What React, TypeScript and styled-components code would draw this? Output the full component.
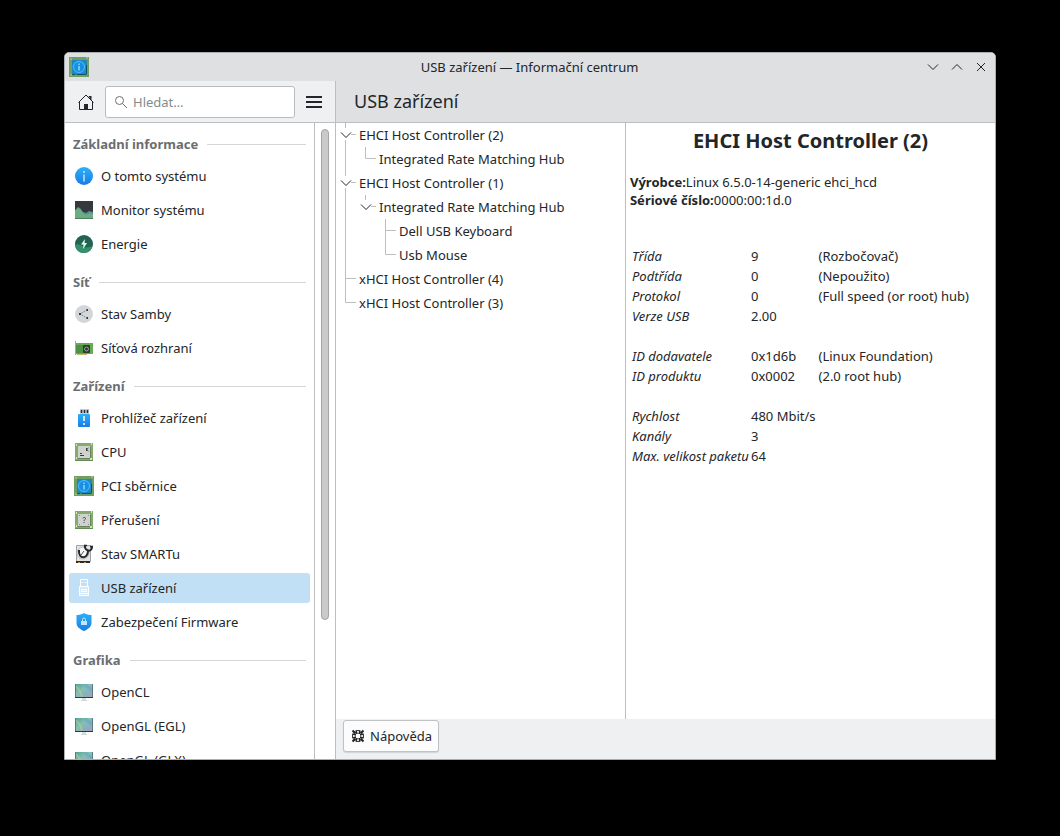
import React from 'react';
import styled, { createGlobalStyle, css } from 'styled-components';

const color = {
  text: '#232629',
  muted: '#6b6e70',
  chrome: '#dee0e2',
  panel: '#eff0f1',
  line: '#bcbec0',
  guide: '#bcbec0',
  highlight: '#c2e0f5',
};

const GlobalStyle = createGlobalStyle`
  * { box-sizing: border-box; }
  body {
    margin: 0;
    background: #000;
    color: ${color.text};
    font: 13px/18px "Noto Sans", sans-serif;
  }
  button, input { font: inherit; color: inherit; }
  svg { display: block; flex: none; }
`;

const Desktop = styled.div`
  height: 100vh;
  padding: 52px 64px 76px;
  display: flex;
`;

const Window = styled.div`
  flex: 1;
  min-width: 0;
  display: flex;
  flex-direction: column;
  background: #fff;
  border: 1px solid #abadaf;
  border-radius: 5px 5px 0 0;
  overflow: hidden;
`;

const TitleBar = styled.header`
  flex: none;
  display: grid;
  grid-template-columns: 72px 1fr 72px;
  align-items: center;
  height: 28px;
  padding: 0 2px 0 3px;
  background: ${color.chrome};
`;

const WindowTitle = styled.div`
  padding-right: 2px;
  text-align: center;
`;

const WindowButtons = styled.div`
  display: flex;
`;

const WindowButton = styled.button`
  display: grid;
  place-items: center;
  width: 24px;
  height: 24px;
  padding: 0;
  border: 0;
  background: none;
`;

const Body = styled.div`
  flex: 1;
  min-height: 0;
  display: flex;
`;

const Sidebar = styled.aside`
  flex: none;
  width: 271px;
  display: flex;
  flex-direction: column;
  border-right: 1px solid ${color.line};
`;

const SidebarHeader = styled.div`
  flex: none;
  display: flex;
  align-items: center;
  height: 42px;
  padding: 0 7px;
  background: ${color.panel};
  border-bottom: 1px solid ${color.line};
`;

const ToolButton = styled.button`
  display: grid;
  place-items: center;
  flex: none;
  width: 28px;
  height: 32px;
  padding: 0;
  border: 0;
  background: none;
`;

const SearchField = styled.label`
  flex: 1;
  min-width: 0;
  display: flex;
  align-items: center;
  gap: 5px;
  height: 32px;
  margin: 0 5px;
  padding: 0 8px;
  background: #fff;
  border: 1px solid #b9bbbd;
  border-radius: 3px;
`;

const SearchInput = styled.input`
  flex: 1;
  min-width: 0;
  padding: 0;
  border: 0;
  outline: 0;
  background: none;
  &::placeholder { color: #7f8c8d; opacity: 1; }
`;

const SidebarBody = styled.div`
  flex: 1;
  min-height: 0;
  display: flex;
`;

const Nav = styled.nav`
  flex: 1;
  min-width: 0;
  overflow: hidden;
  border-right: 1px solid ${color.line};
`;

const GroupTitle = styled.h2`
  display: flex;
  align-items: center;
  gap: 9px;
  height: 36px;
  margin: 0;
  padding: 6px 8px 0;
  color: ${color.muted};
  font-size: 13px;
  font-weight: 700;
  &::after {
    content: "";
    flex: 1;
    height: 1px;
    background: #d5d6d7;
  }
`;

const NavList = styled.ul`
  margin: 0;
  padding: 0 4px;
  list-style: none;
`;

const NavItem = styled.li`
  padding: 2px 0;
`;

const NavLink = styled.a<{ $active?: boolean }>`
  display: flex;
  align-items: center;
  gap: 6px;
  height: 30px;
  padding: 0 4px;
  border-radius: 3px;
  color: inherit;
  text-decoration: none;
  white-space: nowrap;
  ${(p) => p.$active && css`background: ${color.highlight};`}
`;

const ScrollTrack = styled.div`
  flex: none;
  width: 20px;
  display: grid;
  grid-template-rows: 37fr 10fr;
  padding: 6px;
`;

const ScrollThumb = styled.div`
  background: #cacaca;
  border: 1px solid #a3a4a5;
  border-radius: 4px;
`;

const Main = styled.main`
  flex: 1;
  min-width: 0;
  display: flex;
  flex-direction: column;
`;

const PageHeader = styled.div`
  flex: none;
  display: flex;
  align-items: center;
  height: 42px;
  padding: 0 18px 2px;
  background: ${color.chrome};
  border-bottom: 1px solid ${color.line};
`;

const PageTitle = styled.h1`
  margin: 0;
  font-size: 18px;
  line-height: 24px;
  font-weight: 400;
`;

const Panes = styled.div`
  flex: 1;
  min-height: 0;
  display: grid;
  grid-template-columns: 11fr 14fr;
`;

const Tree = styled.ul`
  margin: 0;
  padding: 0;
  list-style: none;
  border-right: 1px solid ${color.line};
`;

const TreeRow = styled.li`
  display: flex;
  align-items: center;
  height: 24px;
  white-space: nowrap;
`;

const TreeLabel = styled.span`
  padding-left: 3px;
`;

const Details = styled.section`
  min-width: 0;
  padding: 4px;
  overflow: hidden;
`;

const DeviceName = styled.h2`
  margin: 0 0 18px;
  font-size: 20px;
  line-height: 28px;
  font-weight: 700;
  text-align: center;
`;

const Summary = styled.p`
  margin: 0 0 37px;
`;

const Properties = styled.table`
  border-collapse: collapse;
  white-space: nowrap;
`;

const PropertyName = styled.th`
  height: 20px;
  min-width: 121px;
  padding: 0 2px;
  font-weight: 400;
  font-style: italic;
  text-align: left;
`;

const PropertyValue = styled.td`
  height: 20px;
  padding: 0 3px 0 0;
`;

const Footer = styled.footer`
  flex: none;
  display: flex;
  height: 40px;
  padding: 1px 7px;
  background: ${color.panel};
`;

const HelpButton = styled.button`
  display: flex;
  align-items: center;
  gap: 4px;
  height: 32px;
  padding: 0 6px;
  background: #fcfcfc;
  border: 1px solid #bfc1c3;
  border-radius: 3px;
  box-shadow: 0 1px 1px rgba(0, 0, 0, 0.12);
`;

type IconName =
  | 'info' | 'monitor' | 'energy' | 'samba' | 'network' | 'devices' | 'cpu'
  | 'pci' | 'interrupts' | 'smart' | 'usb' | 'firmware' | 'display';

const Board = () => (
  <>
    <rect x="2" y="2" width="18" height="18" fill="#82ab6c" />
    <path d="M2 19.500h18" stroke="#648b55" />
    <path d="M3 4h1M18 3h1M3 17h1M17 18h2" stroke="#d5e6b8" strokeWidth="2" />
    <rect x="5" y="5" width="12" height="12" fill="#cfd2ce" />
    <path d="M5 17.500h12M17.500 6v11" stroke="#66835c" />
  </>
);

const shapes: Record<IconName, React.ReactNode> = {
  info: (
    <>
      <circle cx="11" cy="11" r="9" fill="url(#blue)" />
      <path d="M11 6v2M11 9.500v7" stroke="#bfe4ff" strokeWidth="1.500" />
    </>
  ),
  monitor: (
    <>
      <rect x="2" y="2" width="18" height="18" fill="#33393d" />
      <path d="M2 11l3-3 2 1 3 4 3 1 3-2 4 1v7H2z" fill="#5a8f96" />
      <path d="M2 12l3-3 2 1 3 4 3 2 4-2 3 1v5H2z" fill="#6aad80" />
      <path d="M2 19.500h18" stroke="#4c8060" />
    </>
  ),
  energy: (
    <>
      <circle cx="11" cy="11" r="9" fill="#236354" />
      <path d="M2 12c3-2 6 1 9 2s6 0 8.500-1A9 9 0 0 1 2.600 15z" fill="#33906a" />
      <path d="M12 6l-4 5.500h2.500L10 16l4-6h-2.500z" fill="#e6fff0" />
    </>
  ),
  samba: (
    <>
      <circle cx="11" cy="11" r="9" fill="#d3d7da" />
      <path d="M14 7l-7 4 7 4" fill="none" stroke="#7a8085" strokeDasharray="1.500 1" />
      <path d="M13.500 6h1.500v2h-1.500zM6 10h2v2H6zM13.500 14h1.500v2h-1.500z" fill="#33383c" />
    </>
  ),
  network: (
    <>
      <path d="M2.500 4v14" stroke="#a4a8aa" />
      <rect x="3" y="6" width="17" height="11" fill="#68ab54" />
      <path d="M3 8h7v8H3z" fill="#4d9147" />
      <path d="M4 17.500h10" stroke="#c4b565" />
      <rect x="10" y="8" width="7" height="8" rx="1" fill="#2e3b32" />
      <circle cx="13.500" cy="12" r="2" fill="none" stroke="#93a497" />
    </>
  ),
  devices: (
    <>
      <path d="M7 2h9v6H7z" fill="#c9cdd0" />
      <path d="M8.500 3v3M11.500 3v3M14.500 3v3" stroke="#25292c" strokeWidth="1.500" />
      <rect x="5" y="7" width="12" height="13" rx="1" fill="url(#blue)" />
      <path d="M11 9v5M11 16v2" stroke="#fff" strokeWidth="1.500" />
    </>
  ),
  cpu: (
    <>
      <Board />
      <path d="M7 14.500h4M7 12.500h2M13.500 7v3M15.500 7l-2 1.500 2 1.500" fill="none" stroke="#3a4040" />
    </>
  ),
  pci: (
    <>
      <rect x="1" y="1" width="20" height="20" fill="#6f9f62" />
      <path d="M2 3h2M18 2h2M2 19h2" stroke="#b7d690" />
      <rect x="4" y="4" width="15" height="15" fill="#2387b0" />
      <path d="M4 18.500h3M9 18.500h9M18.500 9v9" stroke="#1d4f66" />
      <circle cx="11" cy="11" r="7" fill="#1a8ee2" />
      <circle cx="11" cy="11" r="5.500" fill="none" stroke="#4fbdf7" />
      <path d="M11 7.500V9M11 10v4.500" stroke="#7ddcff" strokeWidth="1.500" />
    </>
  ),
  interrupts: (
    <>
      <Board />
      <path d="M6 6.500h1M15 6.500h1M6 15.500h1M15 15.500h1" stroke="#8d928e" />
      <path d="M10 9.500c0-1.500 2.500-1.500 2.500 0 0 1.500-1.500 1-1.500 2.500M11 13v1" fill="none" stroke="#4b504e" />
    </>
  ),
  smart: (
    <>
      <path d="M3.500 2.500h14v16h-14z" fill="#e4e5e6" stroke="#a0a3a5" />
      <circle cx="10" cy="10" r="6" fill="#f8f8f8" stroke="#b5b8ba" />
      <path d="M3 19h14" stroke="#2b2927" strokeWidth="2" />
      <path d="M5 19.500h2M11 19.500h2" stroke="#c99139" />
      <path d="M6 7c-1 10 9 9 9 1" fill="none" stroke="#24282b" strokeWidth="2" />
      <path d="M12 2c-1 6 7 8 7 2" fill="none" stroke="#24282b" strokeWidth="2" />
      <path d="M11 2.500h3M17 3.500h3" stroke="#24282b" strokeWidth="1.500" />
      <path d="M8 12l3-4" stroke="#555" />
    </>
  ),
  usb: (
    <g fill="none" stroke="#fff">
      <path d="M7.500 9V2.500h7V9M9 5.500h1.500M12 5.500h1.500" />
      <path d="M6.500 9.500h9v9h-9z" fill="#fff" fillOpacity=".3" />
      <path d="M8.500 12.500h5v2h-5zM6 16.500h10" />
    </g>
  ),
  firmware: (
    <>
      <path d="M11 2c2.500 1.500 5 2 7.500 2v8c0 4-4 6.500-7.500 8-3.500-1.500-7.500-4-7.500-8V4C6 4 8.500 3.500 11 2z" fill="url(#blue)" />
      <rect x="8" y="10" width="6" height="4" fill="#c5e4ff" />
      <path d="M9.500 10V8.500a1.500 1.500 0 0 1 3 0V10" fill="none" stroke="#c5e4ff" />
    </>
  ),
  display: (
    <>
      <rect x="2" y="3" width="18" height="14" fill="url(#screen)" />
      <path d="M3 5l4 5 2 6" fill="none" stroke="#c3cf94" strokeWidth="2" opacity=".5" />
      <path d="M12 4l7 5" stroke="#5fa3cc" strokeWidth="3" opacity=".5" />
      <path d="M2.500 3v13M19.500 3v13" stroke="#5a7c84" />
      <path d="M2 16.500h18" stroke="#2c3c43" />
      <path d="M9 17h4v2H9z" fill="#d9dbdd" />
      <path d="M8 19.500h6" stroke="#d2d4d6" />
    </>
  ),
};

const Icon = ({ name }: { name: IconName }) => (
  <svg width="22" height="22" viewBox="0 0 22 22" aria-hidden="true">
    <defs>
      <linearGradient id="blue" x1="0" y1="0" x2="0" y2="1">
        <stop offset="0" stopColor="#2bb0f8" />
        <stop offset="1" stopColor="#1a7ce6" />
      </linearGradient>
      <linearGradient id="screen" x1="0" y1="0" x2="1" y2="1">
        <stop offset="0" stopColor="#4fa09f" />
        <stop offset=".4" stopColor="#86c0ae" />
        <stop offset=".65" stopColor="#85b1c2" />
        <stop offset="1" stopColor="#b79aaa" />
      </linearGradient>
    </defs>
    {shapes[name]}
  </svg>
);

const Stroke = ({ d, size = 12, width = 1 }: { d: string; size?: number; width?: number }) => (
  <svg width={size} height={size} viewBox={`0 0 ${size} ${size}`} fill="none" stroke={color.text} strokeWidth={width} aria-hidden="true">
    <path d={d} />
  </svg>
);

type GuideKind = 'open' | 'line' | 'tee' | 'elbow' | 'openLast' | 'blank';

const guidePath: Record<GuideKind, string> = {
  open: 'M9.500 0V5M9.500 17V24M15 11.500H20',
  openLast: 'M9.500 0V5M15 11.500H20',
  line: 'M9.500 0V24',
  tee: 'M9.500 0V24M9.500 11.500H20',
  elbow: 'M9.500 0V11.500H20',
  blank: '',
};

const Guide = ({ kind }: { kind: GuideKind }) => (
  <svg width="20" height="24" viewBox="0 0 20 24" fill="none" stroke={color.guide} aria-hidden="true">
    <path d={guidePath[kind]} />
    {kind.startsWith('open') && <path d="M5 9.500l5 5 5-5" stroke={color.text} />}
  </svg>
);

const groups: { title: string; items: { icon: IconName; label: string; active?: boolean }[] }[] = [
  {
    title: 'Základní informace',
    items: [
      { icon: 'info', label: 'O tomto systému' },
      { icon: 'monitor', label: 'Monitor systému' },
      { icon: 'energy', label: 'Energie' },
    ],
  },
  {
    title: 'Síť',
    items: [
      { icon: 'samba', label: 'Stav Samby' },
      { icon: 'network', label: 'Síťová rozhraní' },
    ],
  },
  {
    title: 'Zařízení',
    items: [
      { icon: 'devices', label: 'Prohlížeč zařízení' },
      { icon: 'cpu', label: 'CPU' },
      { icon: 'pci', label: 'PCI sběrnice' },
      { icon: 'interrupts', label: 'Přerušení' },
      { icon: 'smart', label: 'Stav SMARTu' },
      { icon: 'usb', label: 'USB zařízení', active: true },
      { icon: 'firmware', label: 'Zabezpečení Firmware' },
    ],
  },
  {
    title: 'Grafika',
    items: [
      { icon: 'display', label: 'OpenCL' },
      { icon: 'display', label: 'OpenGL (EGL)' },
      { icon: 'display', label: 'OpenGL (GLX)' },
    ],
  },
];

const tree: { guides: GuideKind[]; label: string }[] = [
  { guides: ['open'], label: 'EHCI Host Controller (2)' },
  { guides: ['line', 'elbow'], label: 'Integrated Rate Matching Hub' },
  { guides: ['open'], label: 'EHCI Host Controller (1)' },
  { guides: ['line', 'openLast'], label: 'Integrated Rate Matching Hub' },
  { guides: ['line', 'blank', 'tee'], label: 'Dell USB Keyboard' },
  { guides: ['line', 'blank', 'elbow'], label: 'Usb Mouse' },
  { guides: ['tee'], label: 'xHCI Host Controller (4)' },
  { guides: ['elbow'], label: 'xHCI Host Controller (3)' },
];

const properties: string[][] = [
  ['Třída', '9', '(Rozbočovač)'],
  ['Podtřída', '0', '(Nepoužito)'],
  ['Protokol', '0', '(Full speed (or root) hub)'],
  ['Verze USB', '2.00', ''],
  [],
  ['ID dodavatele', '0x1d6b', '(Linux Foundation)'],
  ['ID produktu', '0x0002', '(2.0 root hub)'],
  [],
  ['Rychlost', '480 Mbit/s', ''],
  ['Kanály', '3', ''],
  ['Max. velikost paketu', '64', ''],
];

export default function App() {
  return (
    <Desktop>
      <GlobalStyle />
      <Window>
        <TitleBar>
          <Icon name="pci" />
          <WindowTitle>USB zařízení — Informační centrum</WindowTitle>
          <WindowButtons>
            <WindowButton aria-label="Minimalizovat"><Stroke d="M1 3.500l5 5 5-5" /></WindowButton>
            <WindowButton aria-label="Maximalizovat"><Stroke d="M1 8.500l5-5 5 5" /></WindowButton>
            <WindowButton aria-label="Zavřít"><Stroke d="M2 2l8 8M10 2l-8 8" /></WindowButton>
          </WindowButtons>
        </TitleBar>
        <Body>
          <Sidebar>
            <SidebarHeader>
              <ToolButton aria-label="Domů">
                <svg width="16" height="16" viewBox="0 0 16 16" fill="none" stroke={color.text} aria-hidden="true">
                  <path d="M.5 8.500L8 1l7.500 7.500M1.500 8v7.500h13V8" />
                  <path d="M10.500 2h3v5z" fill={color.text} stroke="none" />
                  <path d="M6 10h4v6H6z" fill={color.text} stroke="none" />
                </svg>
              </ToolButton>
              <SearchField>
                <svg width="14" height="14" viewBox="0 0 14 14" fill="none" stroke="#6e7173" aria-hidden="true">
                  <circle cx="5.500" cy="5.500" r="4" />
                  <path d="M8.500 8.500l4.500 4.500" />
                </svg>
                <SearchInput type="search" placeholder="Hledat…" aria-label="Hledat" />
              </SearchField>
              <ToolButton aria-label="Nabídka">
                <Stroke size={16} width={2} d="M0 3h16M0 8h16M0 13h16" />
              </ToolButton>
            </SidebarHeader>
            <SidebarBody>
              <Nav>
                {groups.map((group) => (
                  <section key={group.title}>
                    <GroupTitle>{group.title}</GroupTitle>
                    <NavList>
                      {group.items.map((item) => (
                        <NavItem key={item.label}>
                          <NavLink href="#" $active={item.active} aria-current={item.active ? 'page' : undefined}>
                            <Icon name={item.icon} />
                            {item.label}
                          </NavLink>
                        </NavItem>
                      ))}
                    </NavList>
                  </section>
                ))}
              </Nav>
              <ScrollTrack><ScrollThumb /></ScrollTrack>
            </SidebarBody>
          </Sidebar>
          <Main>
            <PageHeader><PageTitle>USB zařízení</PageTitle></PageHeader>
            <Panes>
              <Tree>
                {tree.map((row) => (
                  <TreeRow key={row.label + row.guides.join()}>
                    {row.guides.map((kind, i) => <Guide key={i} kind={kind} />)}
                    <TreeLabel>{row.label}</TreeLabel>
                  </TreeRow>
                ))}
              </Tree>
              <Details>
                <DeviceName>EHCI Host Controller (2)</DeviceName>
                <Summary>
                  <b>Výrobce:</b>Linux 6.5.0-14-generic ehci_hcd<br />
                  <b>Sériové číslo:</b>0000:00:1d.0
                </Summary>
                <Properties>
                  <tbody>
                    {properties.map(([name, value, note], i) => (
                      <tr key={i}>
                        <PropertyName scope="row">{name}</PropertyName>
                        <PropertyValue>{value}</PropertyValue>
                        <PropertyValue>{note}</PropertyValue>
                      </tr>
                    ))}
                  </tbody>
                </Properties>
              </Details>
            </Panes>
            <Footer>
              <HelpButton>
                <svg width="16" height="16" viewBox="0 0 16 16" fill="none" stroke={color.text} aria-hidden="true">
                  <circle cx="8" cy="8" r="5.500" />
                  <circle cx="8" cy="8" r="3" />
                  <path d="M6.500 2.500v3M9.500 2.500v3M6.500 10.500v3M9.500 10.500v3M2.500 6.500h3M2.500 9.500h3M10.500 6.500h3M10.500 9.500h3" />
                  <path d="M2.500 2.500l3 3M13.500 2.500l-3 3M2.500 13.500l3-3M13.500 13.500l-3-3" strokeWidth="2" />
                </svg>
                Nápověda
              </HelpButton>
            </Footer>
          </Main>
        </Body>
      </Window>
    </Desktop>
  );
}
